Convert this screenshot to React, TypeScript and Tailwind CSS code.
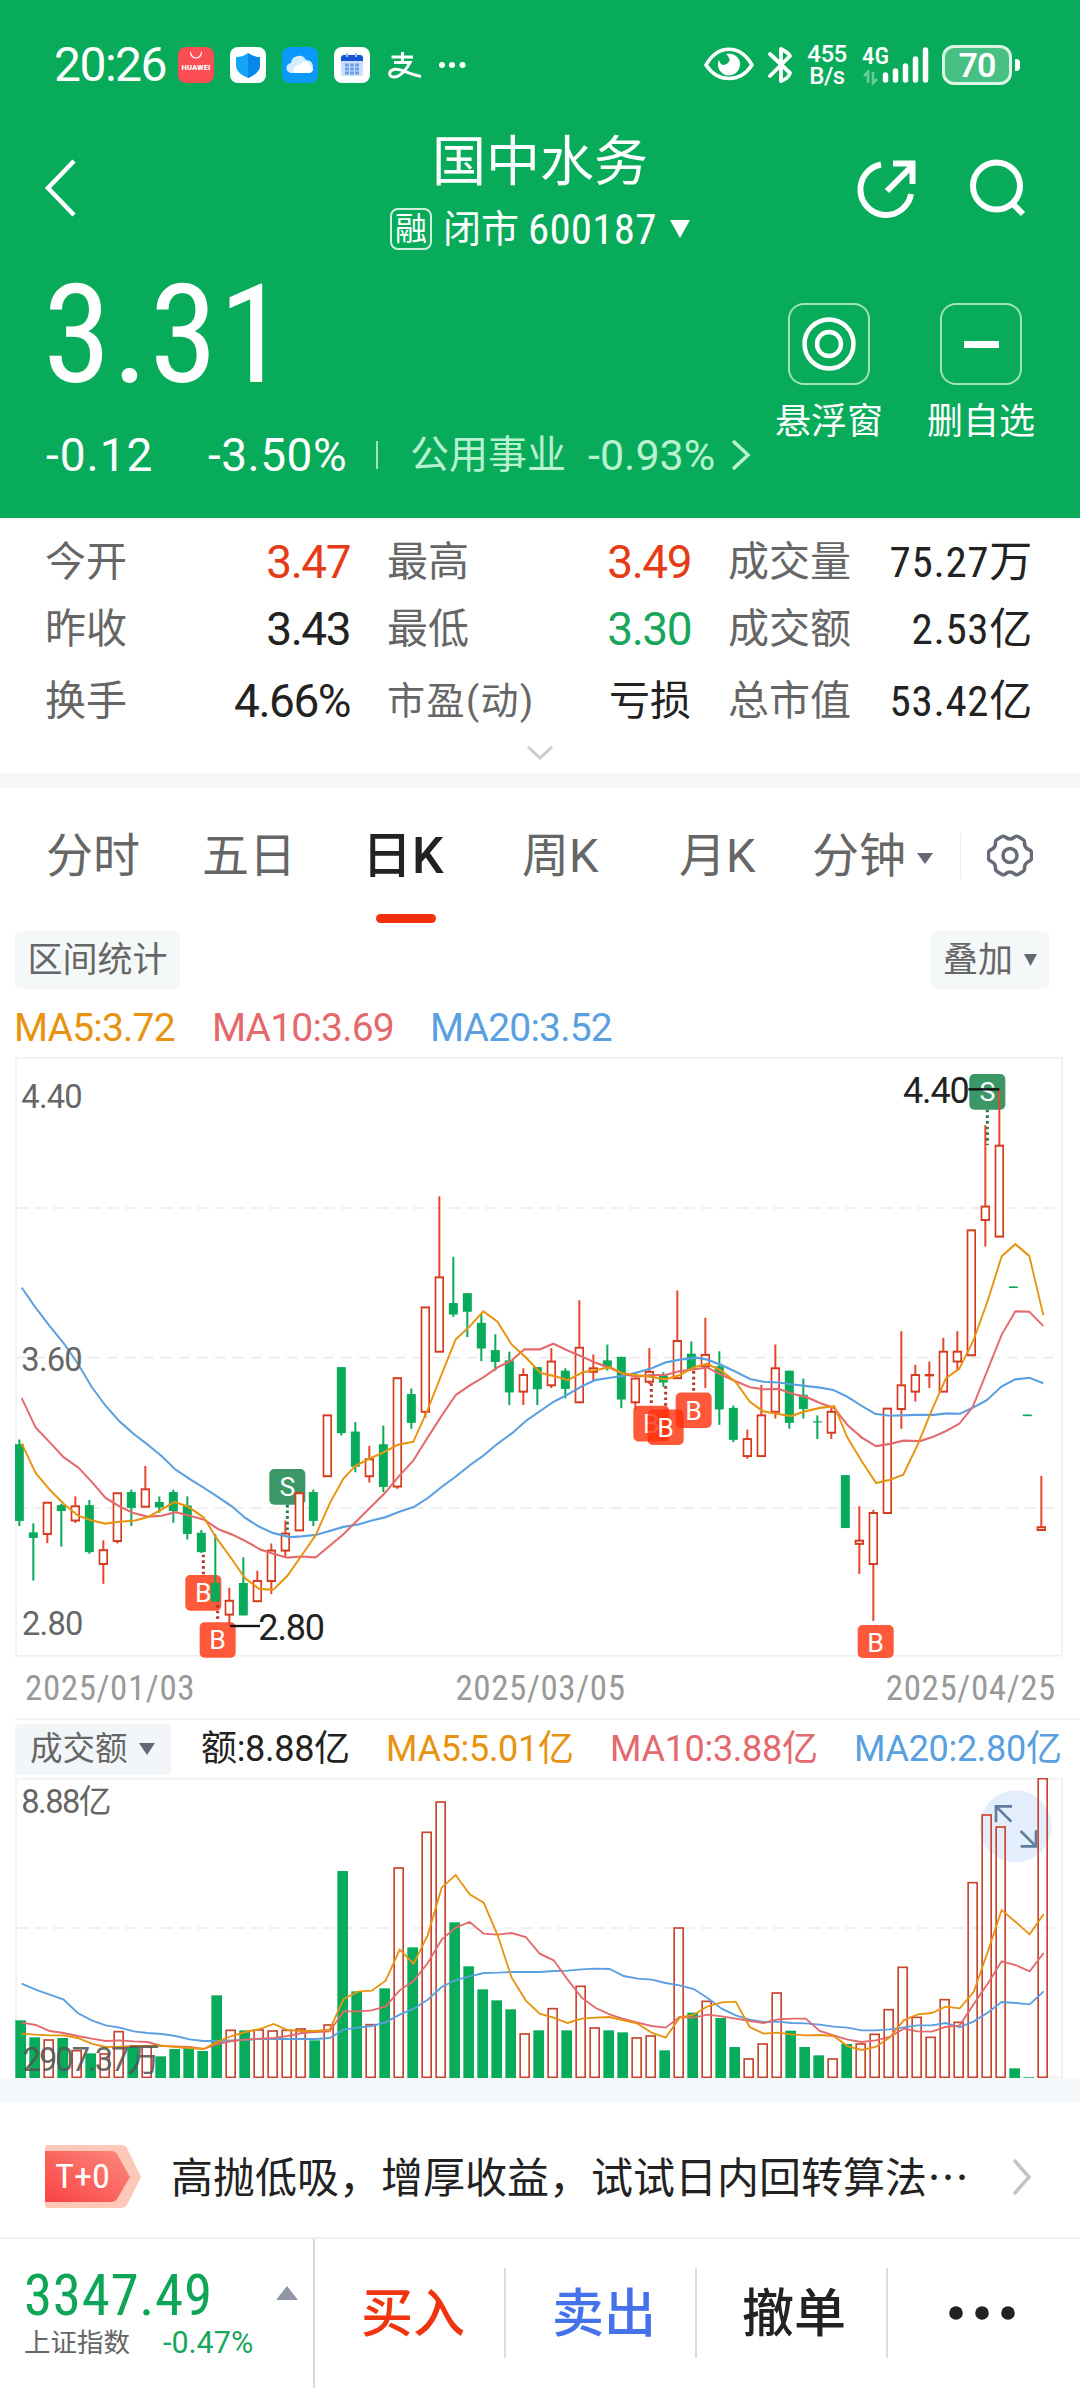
import type { ReactNode } from "react";

// Stock detail page: quote header, key figures, daily K chart with turnover, trade bar.

const RED = "#d63a1e";
const GREEN = "#08ab5a";
const ORANGE = "#e8930f";
const PINK = "#e4696c";
const BLUE = "#5a9fdf";

type Candle = [up: 0 | 1, high: number, top: number, bottom: number, low: number];

// Chart units: three per pixel across, one trading day every 42.
const STEP = 42;
// Price values are stretched by this to fill the panel's height.
const STRETCH = 1.1862;

const candles: Candle[] = [
  [0, 985, 997, 1191, 1204], [0, 1197, 1220, 1234, 1342], [1, 1144, 1144, 1224, 1247],
  [0, 1148, 1151, 1166, 1256], [1, 1129, 1153, 1190, 1196], [0, 1138, 1151, 1270, 1274],
  [1, 1240, 1264, 1300, 1350], [1, 1120, 1120, 1242, 1248], [0, 1112, 1118, 1158, 1204],
  [1, 1052, 1110, 1155, 1155], [0, 1129, 1143, 1157, 1170], [0, 1112, 1118, 1166, 1196],
  [0, 1129, 1152, 1224, 1238], [0, 1214, 1221, 1270, 1272], [0, 1224, 1348, 1395, 1395],
  [1, 1360, 1392, 1428, 1457], [0, 1283, 1348, 1430, 1430], [1, 1317, 1342, 1394, 1394],
  [1, 1248, 1265, 1343, 1376], [1, 1190, 1222, 1266, 1282], [1, 1120, 1120, 1215, 1215],
  [0, 1112, 1118, 1191, 1204], [1, 923, 923, 1078, 1078], [0, 802, 802, 969, 975],
  [0, 941, 965, 1054, 1068], [1, 1001, 1034, 1078, 1094], [0, 950, 997, 1105, 1118],
  [1, 829, 829, 1104, 1110], [0, 856, 870, 943, 958], [1, 650, 650, 915, 930],
  [1, 370, 574, 763, 763], [0, 523, 640, 669, 675], [0, 615, 615, 662, 726],
  [0, 668, 690, 755, 787], [0, 719, 759, 789, 811], [0, 763, 785, 866, 898],
  [1, 805, 821, 864, 898], [0, 802, 802, 858, 898], [1, 754, 787, 848, 855],
  [0, 805, 811, 857, 881], [1, 633, 752, 891, 891], [1, 770, 804, 814, 836],
  [0, 745, 785, 802, 811], [0, 776, 776, 884, 906], [1, 830, 830, 891, 912],
  [1, 754, 813, 839, 845], [0, 815, 823, 841, 852], [1, 608, 735, 830, 830],
  [0, 737, 768, 808, 808], [1, 677, 770, 800, 855], [0, 762, 800, 909, 948],
  [0, 899, 905, 986, 992], [1, 960, 983, 1027, 1034], [1, 847, 923, 1027, 1027],
  [1, 745, 804, 915, 932], [0, 811, 811, 943, 958], [0, 831, 872, 908, 932],
  [0, 924, 939, 942, 984], [1, 905, 914, 968, 984], [0, 1075, 1075, 1209, 1209],
  [1, 1154, 1240, 1249, 1325], [1, 1163, 1170, 1300, 1444], [1, 906, 906, 1171, 1171],
  [1, 711, 847, 908, 958], [1, 796, 821, 864, 889], [1, 788, 821, 822, 855],
  [1, 728, 762, 864, 864], [1, 711, 762, 788, 810], [1, 455, 455, 772, 772],
  [1, 190, 395, 430, 497], [1, 100, 241, 472, 472], [0, 598, 598, 602, 602],
  [0, 922, 922, 926, 926], [1, 1077, 1206, 1214, 1214],
];

const turnover = [
  1110, 1161, 1168, 1163, 1200, 1209, 1210, 1143, 1187, 1186, 1218, 1196, 1190, 1202, 1035,
  1139, 1140, 1138, 1141, 1139, 1135, 1170, 1123, 662, 1023, 1122, 1014, 652, 891, 545, 454,
  816, 948, 1017, 1050, 1077, 1150, 1140, 1074, 1140, 1007, 1132, 1140, 1146, 1162, 1156,
  1200, 832, 1087, 1052, 1103, 1190, 1225, 1180, 1027, 1141, 1190, 1215, 1225, 1181, 1180,
  1151, 1077, 950, 1100, 1160, 1047, 1115, 696, 493, 529, 1254, 1281, 384,
];

const ma5 =
  "65,995 107,1070 149,1112 191,1148 235,1178 275,1190 316,1198 360,1193 405,1190 445,1181 485,1162 523,1143 562,1154 611,1182 650,1235 695,1287 735,1336 778,1363 820,1365 862,1330 905,1278 947,1227 989,1147 1030,1084 1066,1052 1108,1034 1150,1018 1195,998 1240,991 1282,912 1325,820 1367,732 1408,700 1450,661 1492,687 1535,745 1578,778 1622,817 1660,824 1703,835 1748,815 1785,810 1830,802 1868,818 1906,822 1950,826 1997,833 2040,822 2080,803 2122,794 2165,812 2207,840 2250,890 2290,914 2330,920 2373,926 2415,914 2460,905 2503,901 2542,980 2585,1040 2628,1095 2670,1087 2710,1074 2752,1000 2795,912 2838,830 2878,806 2920,735 2962,637 3005,522 3046,491 3088,521 3130,671";
const ma10 =
  "65,880 107,955 149,992 191,1030 235,1056 275,1092 317,1133 360,1155 400,1171 443,1180 485,1178 527,1169 569,1178 613,1188 655,1212 695,1225 735,1241 780,1263 820,1274 862,1284 905,1281 947,1283 1030,1225 1075,1187 1155,1120 1200,1075 1240,1038 1283,980 1325,925 1367,873 1410,848 1450,828 1492,803 1535,785 1573,757 1620,757 1660,743 1703,760 1747,776 1790,792 1830,804 1872,820 1910,826 1955,822 1997,822 2040,812 2080,808 2122,803 2165,822 2207,838 2250,853 2290,858 2335,857 2380,870 2420,878 2460,893 2503,906 2542,948 2585,980 2628,1002 2670,996 2710,988 2760,989 2800,978 2840,963 2878,945 2918,903 2960,815 3005,720 3046,661 3088,662 3130,698";
const ma20 =
  "65,601 107,652 149,698 195,746 235,795 275,852 317,900 357,938 400,970 443,998 485,1027 525,1060 569,1085 613,1108 655,1131 697,1155 735,1183 778,1206 820,1222 870,1232 905,1230 950,1226 1030,1206 1075,1200 1115,1190 1155,1182 1200,1167 1243,1155 1285,1132 1325,1105 1367,1079 1410,1050 1450,1026 1492,996 1535,970 1578,938 1660,890 1703,871 1747,850 1785,835 1830,829 1870,824 1910,816 1955,805 1997,790 2040,783 2090,778 2122,783 2165,797 2207,814 2250,832 2290,839 2335,841 2380,846 2460,854 2500,860 2542,877 2585,900 2625,920 2670,925 2750,923 2800,923 2840,919 2880,920 2918,905 2960,886 3005,851 3046,833 3088,829 3130,843";

const turnover5 = [
  1150, 1153, 1155, 1155, 1163, 1180, 1190, 1189, 1187, 1187, 1186, 1190, 1193, 1196, 1174,
  1157, 1145, 1136, 1121, 1139, 1142, 1142, 1138, 1046, 1024, 1021, 991, 898, 940, 855, 712,
  674, 732, 757, 855, 982, 1050, 1090, 1102, 1118, 1105, 1102, 1100, 1110, 1120, 1147, 1162,
  1102, 1093, 1068, 1056, 1054, 1130, 1150, 1147, 1152, 1155, 1154, 1157, 1188, 1199, 1190,
  1162, 1110, 1092, 1088, 1069, 1074, 1025, 905, 779, 815, 852, 791,
];
const turnover10 = [
  1117, 1124, 1142, 1148, 1157, 1165, 1172, 1170, 1173, 1175, 1187, 1188, 1190, 1196, 1181,
  1172, 1168, 1165, 1163, 1157, 1148, 1145, 1143, 1083, 1083, 1080, 1068, 1020, 992, 938, 868,
  832, 815, 850, 853, 848, 860, 910, 930, 988, 1042, 1073, 1092, 1106, 1117, 1127, 1132, 1100,
  1102, 1093, 1098, 1105, 1112, 1118, 1107, 1105, 1105, 1142, 1155, 1168, 1175, 1170, 1160,
  1135, 1143, 1144, 1130, 1125, 1062, 1000, 933, 944, 963, 908,
];
const turnover20 = [
  1000, 1018, 1033, 1048, 1088, 1110, 1125, 1132, 1143, 1148, 1151, 1157, 1167, 1172, 1172,
  1170, 1169, 1166, 1166, 1166, 1166, 1166, 1163, 1138, 1132, 1127, 1116, 1093, 1075, 1048,
  1010, 989, 978, 968, 967, 965, 965, 965, 962, 961, 957, 955, 956, 977, 985, 988, 998, 1005,
  1016, 1043, 1075, 1095, 1108, 1115, 1114, 1118, 1119, 1123, 1129, 1132, 1140, 1140, 1137,
  1131, 1125, 1125, 1118, 1131, 1113, 1087, 1055, 1058, 1062, 1023,
];

const toPoints = (ys: number[]) => ys.map((y, i) => `${65 + i * STEP},${y}`).join(" ");

const trades = [
  { side: "B", x: 556, y: 1328, from: 1262, to: 1328 },
  { side: "B", x: 599, y: 1447, from: 1375, to: 1447 },
  { side: "S", x: 808, y: 1060, from: 1150, to: 1230 },
  { side: "B", x: 1900, y: 900, from: 843, to: 900 },
  { side: "B", x: 1943, y: 909, from: 850, to: 909 },
  { side: "B", x: 2027, y: 866, from: 812, to: 866 },
  { side: "B", x: 2573, y: 1454, from: 1454, to: 1454 },
  { side: "S", x: 2908, y: 61, from: 151, to: 240 },
];

function PriceChart() {
  return (
    <svg viewBox="45 18 3144 1821" className="block h-[607px] w-[1048px] [font-stretch:100%]">
      <rect x="48" y="24" width="3138" height="1793" fill="none" stroke="#f0f0f0" strokeWidth="5" />
      {[474, 923, 1374].map((y) => (
        <line key={y} x1="50" x2="3170" y1={y} y2={y} stroke="#ececec" strokeWidth="5" strokeDasharray="34 20" />
      ))}
      {trades.map((t) => (
        <g key={t.x}>
          <line
            x1={t.x + 54} x2={t.x + 54} y1={t.from * STRETCH} y2={t.to * STRETCH}
            stroke={t.side === "B" ? "#b5362a" : "#1f7d45"} strokeWidth="9" strokeDasharray="8 9"
          />
          <rect
            x={t.x} y={t.y * STRETCH} width="108" height={t.y > 1450 ? 99 : 107} rx="15"
            fill={t.side === "B" ? "#ff2f0a" : "#0b7d40"} fillOpacity="0.8"
          />
          <text x={t.x + 54} y={t.y * STRETCH + 82} fill="#fff" fontSize="80" textAnchor="middle">{t.side}</text>
        </g>
      ))}
      <g transform={`scale(1 ${STRETCH})`}>
        {candles.map(([up, high, top, bottom, low], i) => {
          const x = 58 + i * STEP;
          return up ? (
            <g key={i} stroke={RED}>
              <line x1={x} x2={x} y1={high} y2={top} stroke="#e8452f" strokeWidth="6" />
              <line x1={x} x2={x} y1={bottom} y2={low} stroke="#e8452f" strokeWidth="6" />
              <rect x={x - 11.5} y={top + 1} width="23" height={Math.max(bottom - top - 1, 1)} fill="#fff" strokeWidth="5" />
            </g>
          ) : (
            <g key={i} fill={GREEN}>
              <rect x={x - 3} y={high} width="6" height={low - high} />
              <rect x={x - 13.5} y={top} width="27" height={bottom - top} />
            </g>
          );
        })}
        <g fill="none" strokeWidth="5.500">
          <polyline points={ma20} stroke={BLUE} />
          <polyline points={ma10} stroke={PINK} />
          <polyline points={ma5} stroke={ORANGE} />
        </g>
      </g>
      <g fill="#666" fontSize="98">
        <text x="64" y="174" textLength="184">4.40</text>
        <text x="64" y="962" textLength="184">3.60</text>
        <text x="66" y="1756" textLength="184">2.80</text>
      </g>
      <g stroke="#111" strokeWidth="7">
        <line x1="690" x2="780" y1="1728" y2="1728" />
        <line x1="2905" x2="2998" y1="118" y2="118" />
      </g>
      <g fill="#222" fontSize="108">
        <text x="775" y="1771" textLength="200">2.80</text>
        <text x="2709" y="159" textLength="200">4.40</text>
      </g>
    </svg>
  );
}

function TurnoverChart() {
  return (
    <svg viewBox="45 383 3144 900" className="block h-[300px] w-[1048px] [font-stretch:100%]">
      <rect x="48" y="385" width="3138" height="895" fill="none" stroke="#f0f0f0" strokeWidth="5" />
      <line x1="50" x2="3170" y1="833" y2="833" stroke="#ebebf0" strokeWidth="5" strokeDasharray="34 20" />
      <circle cx="3047" cy="528" r="108" fill="#e4edfb" />
      <g fill="none" stroke="#5f7da1" strokeWidth="8">
        <path d="M3034 514 2988 468M2988 516V468H3036" />
        <path d="M3062 542 3108 588M3108 540V588H3062" />
      </g>
      <text x="64" y="487" fill="#666" fontSize="98" textLength="270">8.88亿</text>
      {turnover.map((y, i) => {
        const x = 62 + i * STEP;
        return candles[i][0] ? (
          <rect key={i} x={x - 13.5} y={y + 1} width="27" height={1280 - y} fill="#fff" fillOpacity={i > 67 ? 0 : 1} stroke="#c8452f" strokeWidth="5" />
        ) : (
          <rect key={i} x={x - 16} y={y} width="32" height={1283 - y} fill={GREEN} />
        );
      })}
      <g fill="none" strokeWidth="5.500">
        <polyline points={toPoints(turnover20)} stroke={BLUE} />
        <polyline points={toPoints(turnover10)} stroke={PINK} />
        <polyline points={toPoints(turnover5)} stroke={ORANGE} />
      </g>
      <text x="68" y="1261" fill="#555" fillOpacity="0.9" fontSize="98" textLength="412">2907.37万</text>
    </svg>
  );
}

function StatusBar() {
  return (
    <div className="flex h-[130px] items-start justify-between pt-[44px] pr-[60px] pl-[54px]">
      <div className="flex h-[42px] items-center">
        <span className="w-[124px] text-[48px] leading-none font-[450] tracking-[-1.500px] [font-stretch:100%]">20:26</span>
        <svg viewBox="0 0 292 36" className="h-9 w-[292px]">
          <rect width="36" height="36" rx="8" fill="#fb4d54" />
          <path d="M12.500 5a5.500 6 0 0 0 11 0" fill="none" stroke="#fff" strokeWidth="1.200" />
          <text x="3.500" y="23" fontSize="7.500" fontWeight="700" fill="#fff" textLength="29" lengthAdjust="spacingAndGlyphs">HUAWEI</text>
          <rect x="52" width="36" height="36" rx="8" fill="#fff" />
          <path d="M70 6c4 3 8 4 12 4v8c0 6-5 10-12 13-7-3-12-7-12-13v-8c4 0 8-1 12-4z" fill="#14a4fa" />
          <path d="M70 6c4 3 8 4 12 4v8c0 6-5 10-12 13z" fill="#0787ea" />
          <rect x="104" width="36" height="36" rx="8" fill="#0a99fb" />
          <path d="M114 26a5 5 0 0 1-1-10 8 8 0 0 1 15-3 6.500 6.500 0 0 1 1 13z" fill="#d3ecff" />
          <path d="M116 26c-2-5 2-9 6-8 2-5 10-4 10 1 5 2 3 7-1 7z" fill="#fff" />
          <rect x="156" width="36" height="36" rx="8" fill="#fff" />
          <rect x="163" y="9" width="22" height="20" rx="3" fill="#c9defa" />
          <path d="M163 14v-3a3 3 0 0 1 3-3h16a3 3 0 0 1 3 3v3z" fill="#1457d2" />
          <path d="M169 6v4M178 6v4" stroke="#9fc3f7" strokeWidth="2" />
          <path d="M167 18h14M167 22h14M167 26h14" stroke="#6fa0ea" strokeWidth="3" strokeDasharray="4 1" />
          <g fill="none" stroke="#fff" strokeWidth="3">
            <path d="M213.500 10h21.500M224.500 5v10M216 15.500h16c-3 6-9 14-15 14.500-7 .500-7-6-1-7.500 7-1.500 13 4.500 27 7" />
          </g>
          <g fill="#fff">
            <circle cx="264" cy="18" r="3" />
            <circle cx="274" cy="18" r="3" />
            <circle cx="284.500" cy="18" r="3" />
          </g>
        </svg>
      </div>
      <div className="flex h-[42px] items-center">
        <svg viewBox="0 0 88 40" className="h-10 w-[88px]" fill="none" stroke="#fff">
          <path d="M2 20C14-1 36-1 48 20 36 38 14 38 2 20z" strokeWidth="3.600" strokeLinejoin="round" />
          <path d="M15 15q2 8 9 3 4-4-2-9c9-2 15 5 14 11-1 10-13 14-19 7-3-3-4-8-2-12z" fill="#fff" stroke="none" />
          <path d="m66 9 20 19q-1 5-9 8V4q8 4 9 7L66 31" strokeWidth="3.800" strokeLinecap="round" strokeLinejoin="round" />
        </svg>
        <div className="ml-[13px] flex w-[44px] flex-col items-center text-[24px] leading-[22px] font-medium tracking-[-0.500px] [font-stretch:100%]">
          <span className="h-[22px]">455</span>
          <span className="h-[22px]">B/s</span>
        </div>
        <svg viewBox="0 0 72 42" className="ml-[12px] h-[42px] w-[72px] overflow-visible">
          <text x="1" y="20" fontSize="24" fontWeight="500" fill="#fff" textLength="27" lengthAdjust="spacingAndGlyphs">4G</text>
          <path d="M3 32l4-4v11M12 28v11l4-4" fill="none" stroke="#fff" strokeOpacity="0.4" strokeWidth="2.600" />
          <g stroke="#fff" strokeWidth="5.500" strokeLinecap="round">
            <path d="M24.500 36v-5M34.500 36v-9M44.500 36v-14M54.500 36v-21M64.500 36v-30" />
          </g>
        </svg>
        <div className="ml-[9px] flex h-[40px] w-[70px] items-center justify-center rounded-[12px] border-[3px] border-[#dcf6e6] bg-white/25 text-[34px] leading-none font-semibold tracking-[-1px] [font-stretch:100%]">
          70
        </div>
        <div className="ml-[3px] h-[12px] w-[5px] rounded-r bg-white" />
      </div>
    </div>
  );
}

function HeaderAction({ label, children }: { label: string; children: ReactNode }) {
  return (
    <div className="flex w-[152px] flex-col items-center">
      <div className="flex h-[82px] w-[82px] items-center justify-center rounded-[16px] border-2 border-[#9fe3bd]">
        {children}
      </div>
      <span className="mt-[10px] text-[36px] leading-[54px]">{label}</span>
    </div>
  );
}

function Header() {
  return (
    <header className="h-[518px] bg-[#08ab5a] text-white">
      <StatusBar />
      <div className="flex h-[130px] items-start justify-between pr-[54px] pl-[44px]">
        <svg viewBox="0 0 32 58" className="mt-[29px] h-[58px] w-[132px]" preserveAspectRatio="xMinYMid">
          <path d="M30 2 4 29 30 56" fill="none" stroke="#fff" strokeWidth="4.500" />
        </svg>
        <div className="flex flex-col items-center pl-[50px]">
          <h1 className="mt-[2px] text-[54px] leading-[62px]">国中水务</h1>
          <div className="mt-[13px] flex h-[44px] items-center">
            <span className="flex h-[42px] w-[42px] items-center justify-center rounded-[8px] border-2 border-white/80 text-[32px] leading-none">
              融
            </span>
            <span className="ml-[11px] text-[38px] leading-none">闭市</span>
            <span className="ml-[9px] w-[134px] text-[43px] leading-none tracking-[0.200px]">600187</span>
            <svg viewBox="0 0 20 18" className="ml-[8px] h-[18px] w-5">
              <path d="M0 0h20L10 18z" fill="#fff" />
            </svg>
          </div>
        </div>
        <svg viewBox="0 0 172 62" className="mt-[28px] h-[62px] w-[172px]" fill="none" stroke="#fff" strokeWidth="6">
          <path d="M27 6.500A25.500 25.500 0 1 0 57 36M33 33 58 8M39 5.500H58.500V26" />
          <circle cx="142.500" cy="28" r="23.500" />
          <path d="m158 45 11 11" />
        </svg>
      </div>
      <div className="flex h-[258px] justify-between pr-[23px] pl-[46px]">
        <div>
          <div className="mt-[20px] -ml-[3px] text-[138px] leading-[110px] font-[450] tracking-[1px]">3.31</div>
          <div className="mt-[40px] flex h-[50px] items-center text-[46px] [font-stretch:100%]">
            <span className="w-[162px] tracking-[1px]">-0.12</span>
            <span className="w-[168px] tracking-[0.500px]">-3.50%</span>
            <span className="h-[28px] w-[2px] bg-[#9fe3bd]" />
            <span className="ml-[32px] text-[39px] text-[#b8f2d0]">公用事业</span>
            <span className="ml-[22px] w-[130px] text-[43px] text-[#b8f2d0]">-0.93%</span>
            <svg viewBox="0 0 20 30" className="ml-[13px] h-[30px] w-5">
              <path d="M2 1 17 15 2 29" fill="none" stroke="#b8f2d0" strokeWidth="3.500" />
            </svg>
          </div>
        </div>
        <div className="flex pt-[43px]">
          <HeaderAction label="悬浮窗">
            <svg viewBox="0 0 54 54" className="h-[54px] w-[54px]" fill="none" stroke="#fff">
              <circle cx="27" cy="27" r="24.500" strokeWidth="4.500" />
              <circle cx="27" cy="27" r="12" strokeWidth="4.500" />
            </svg>
          </HeaderAction>
          <HeaderAction label="删自选">
            <div className="h-[7px] w-[35px] bg-white" />
          </HeaderAction>
        </div>
      </div>
    </header>
  );
}

const figures = [
  ["今开", "3.47", "text-[46px] tracking-[-1.500px] text-[#e63b17]"],
  ["最高", "3.49", "text-[46px] tracking-[-1.500px] text-[#e63b17]"],
  ["成交量", "75.27万", "text-[43px] tracking-[0.700px] [font-stretch:85%] text-[#222]"],
  ["昨收", "3.43", "text-[46px] tracking-[-1.500px] text-[#222]"],
  ["最低", "3.30", "text-[46px] tracking-[-1.500px] text-[#18a65c]"],
  ["成交额", "2.53亿", "text-[43px] tracking-[0.700px] [font-stretch:85%] text-[#222]"],
  ["换手", "4.66%", "text-[46px] tracking-[-1.500px] text-[#222]"],
  ["市盈(动)", "亏损", "text-[41px] text-[#222]"],
  ["总市值", "53.42亿", "text-[43px] tracking-[0.700px] [font-stretch:85%] text-[#222]"],
];

function Figures() {
  return (
    <section className="h-[255px] pt-[10px] [font-stretch:100%]">
      <div className="grid grid-cols-[305px_304px_305px] grid-rows-[68px_66px_78px] gap-x-[37px] pl-[45px]">
        {figures.map(([label, value, style]) => (
          <div key={label} className="flex items-center justify-between leading-none">
            <span className={`text-[#666] ${label.includes("(") ? "text-[38px] tracking-[1.500px]" : "text-[41px]"}`}>{label}</span>
            <span className={style}>{value}</span>
          </div>
        ))}
      </div>
      <svg viewBox="0 0 26 14" className="mx-auto mt-[6px] h-[14px] w-[26px]">
        <path d="m1 1 12 11L25 1" fill="none" stroke="#ccc" strokeWidth="3" />
      </svg>
    </section>
  );
}

function Tabs() {
  return (
    <nav className="flex h-[141px] items-start pt-[41px] pl-[46px] text-[47px] leading-[54px] text-[#666] [font-stretch:100%]">
      <span className="w-[156px]">分时</span>
      <span className="w-[160px]">五日</span>
      <span className="flex w-[160px] flex-col text-[50px] font-medium text-[#222]">
        日K
        <span className="mt-[31px] ml-[14px] h-[9px] w-[60px] rounded-full bg-[#f5300f]" />
      </span>
      <span className="w-[157px]">周K</span>
      <span className="w-[133px]">月K</span>
      <span className="flex w-[148px] items-center">
        分钟
        <svg viewBox="0 0 16 11" className="mt-1 ml-[11px] h-[11px] w-4">
          <path d="M0 0h16L8 11z" fill="#666875" />
        </svg>
      </span>
      <span className="mt-[4px] h-[46px] w-px bg-[#eee]" />
      <svg viewBox="0 0 46 46" className="mt-[4px] ml-[26px] h-[46px] w-[46px]" fill="none" stroke="#666b78" strokeWidth="3.500" strokeLinejoin="round">
        <path d="M15 3.500q2-1 4 1 4 3 8 0 2-2 4-1l5 3q2 1 1.500 4 0 4 4 6 3 1 3 3v6q0 2-3 3-4 2-4 6 .500 3-1.500 4l-5 3q-2 1-4-1-4-3-8 0-2 2-4 1l-5-3q-2-1-1.500-4 0-4-4-6-3-1-3-3v-6q0-2 3-3 4-2 4-6-.500-3 1.500-4z" />
        <circle cx="23" cy="22.500" r="7" />
      </svg>
    </nav>
  );
}

function ChipArrow() {
  return (
    <svg viewBox="0 0 16 12" className="h-[12px] w-4">
      <path d="M0 0h16L8 12z" fill="#666875" />
    </svg>
  );
}

function TradeBar() {
  return (
    <footer className="flex h-[151px] border-t-2 border-[#f1f1f1]">
      <div className="flex w-[315px] justify-between border-r-2 border-[#d8d8d8] pt-[28px] pr-[15px] pl-[24px]">
        <div>
          <div className="text-[57px] leading-[58px] tracking-[0.700px] text-[#0fa558]">3347.49</div>
          <div className="mt-px flex items-center leading-[34px]">
            <span className="text-[26.500px] text-[#666]">上证指数</span>
            <span className="ml-[33px] text-[30.500px] text-[#18a65c] [font-stretch:100%]">-0.47%</span>
          </div>
        </div>
        <svg viewBox="0 0 22 14" className="mt-[19px] -ml-2 h-[14px] w-[22px] shrink-0">
          <path d="M0 14h22L11 0z" fill="#9096a3" />
        </svg>
      </div>
      <div className="my-[29px] flex h-[90px] flex-1 text-[52px] leading-[94px] font-medium">
        <span className="w-[191px] border-r-2 border-[#ddd] pl-[46px] text-[#ef340f]">买入</span>
        <span className="w-[191px] border-r-2 border-[#ddd] pl-[46px] text-[#4472ea]">卖出</span>
        <span className="w-[191px] border-r-2 border-[#ddd] pl-[45px] text-[#222]">撤单</span>
        <svg viewBox="0 0 66 14" className="mt-[38px] ml-[61px] h-[14px] w-[66px] fill-[#222]">
          <circle cx="7" cy="7" r="6.800" />
          <circle cx="33" cy="7" r="6.800" />
          <circle cx="59" cy="7" r="6.800" />
        </svg>
      </div>
    </footer>
  );
}

export default function App() {
  return (
    <div className="h-[2388px] w-[1080px] overflow-hidden bg-white font-[Roboto,'Noto_Sans_CJK_SC',sans-serif] [font-stretch:85%]">
      <Header />
      <Figures />
      <div className="h-[15px] bg-[#f7f7f7]" />
      <Tabs />

      <section className="h-[1149px]">
        <div className="flex h-[62px] items-center justify-between pr-[31px] pl-[15px] text-[35px] leading-none text-[#666]">
          <span className="flex h-[58px] w-[165px] items-center justify-center rounded-[6px] bg-[#f5f8f9]">区间统计</span>
          <span className="flex h-[58px] w-[118px] items-center rounded-[6px] bg-[#f5f8f9] pl-[12px]">
            叠加
            <svg viewBox="0 0 16 12" className="ml-[11px] h-[12px] w-[13px]" preserveAspectRatio="none">
              <path d="M0 0h16L8 12z" fill="#666875" />
            </svg>
          </span>
        </div>
        <div className="flex h-[65px] items-center pt-[10px] pl-[14px] text-[39px] leading-none tracking-[-0.800px] [font-stretch:100%]">
          <span className="w-[198px] text-[#e8930f]">MA5:3.72</span>
          <span className="w-[218px] text-[#e4696c]">MA10:3.69</span>
          <span className="text-[#5a9fdf]">MA20:3.52</span>
        </div>
        <div className="pl-[15px]">
          <PriceChart />
        </div>
        <div className="flex h-[55px] items-center justify-between pr-[24px] pb-[4px] pl-[25px] text-[35px] leading-none tracking-[0.600px] text-[#999]">
          <span>2025/01/03</span>
          <span>2025/03/05</span>
          <span>2025/04/25</span>
        </div>
        <div className="ml-[15px] flex h-[60px] items-center border-t-2 border-[#f3f3f3] text-[36px] leading-none tracking-[-0.300px] whitespace-nowrap [font-stretch:100%]">
          <span className="flex h-[51px] w-[156px] items-center justify-between rounded-[4px] bg-[#f3f6f8] pr-[16px] pl-[15px] text-[32.500px] tracking-normal text-[#666]">
            成交额
            <ChipArrow />
          </span>
          <span className="ml-[30px] w-[185px] text-[#222]">额:8.88亿</span>
          <span className="w-[224px] text-[#e8930f]">MA5:5.01亿</span>
          <span className="w-[244px] text-[#e4696c]">MA10:3.88亿</span>
          <span className="text-[#5a9fdf]">MA20:2.80亿</span>
        </div>
        <div className="pl-[15px]">
          <TurnoverChart />
        </div>
      </section>
      <div className="h-[24px] bg-[#f4f8fb]" />

      <div className="flex h-[135px] items-center pt-[14px] pl-[45px]">
        <svg viewBox="0 0 96 63" className="h-[63px] w-24">
          <defs>
            <linearGradient id="badge" x1="0" y1="1" x2="1" y2="0">
              <stop offset="0" stopColor="#fb4244" />
              <stop offset="1" stopColor="#fb8a7d" />
            </linearGradient>
          </defs>
          <path d="M3 0h73q4 0 6 3l14 29-14 28q-2 3-6 3H3q-3 0-3-3V3q0-3 3-3z" fill="#fdc8b8" />
          <path d="M0 6h66q4 0 6 3l13 23-13 22q-2 3-6 3H0z" fill="url(#badge)" />
          <text x="10" y="43" fontSize="34" fill="#fff" textLength="55" lengthAdjust="spacingAndGlyphs">T+0</text>
        </svg>
        <span className="mt-[4px] ml-[30px] w-[841px] text-[42px] leading-none whitespace-nowrap text-[#222]">
          高抛低吸，增厚收益，试试日内回转算法⋯
        </span>
        <svg viewBox="0 0 20 36" className="h-9 w-5">
          <path d="M2 1 17 18 2 35" fill="none" stroke="#c4c4c4" strokeWidth="3.500" />
        </svg>
      </div>
      <TradeBar />
    </div>
  );
}
